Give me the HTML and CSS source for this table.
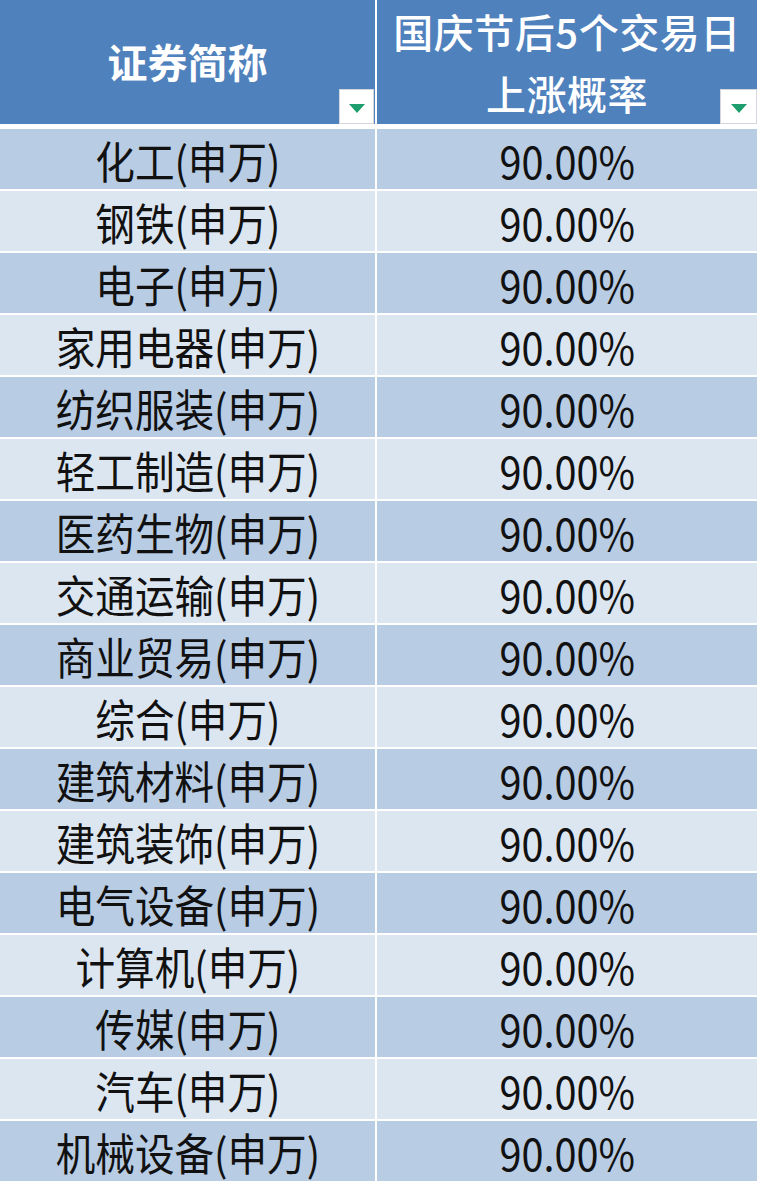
FILE: index.html
```html
<!DOCTYPE html>
<html lang="zh-CN">
<head>
<meta charset="utf-8">
<title>申万行业上涨概率</title>
<link rel="stylesheet" href="styles.css">
</head>
<body>
<div class="table">
  <div class="hcell">
    <span class="htext">证券简称</span>
    <span class="filter"><svg width="16" height="9" viewBox="0 0 16 9"><polygon points="0,0 16,0 8,9" fill="#1e9e6e"/></svg></span>
  </div>
  <div class="hcell hcell-r">
    <span class="htext htext-2">国庆节后5个交易日<br>上涨概率</span>
    <span class="filter filter-r"><svg width="16" height="9" viewBox="0 0 16 9"><polygon points="0,0 16,0 8,9" fill="#1e9e6e"/></svg></span>
  </div>

  <div class="cell dark"><span class="txt">化工(申万)</span></div><div class="cell dark"><span class="txt">90.00%</span></div>
  <div class="cell light"><span class="txt">钢铁(申万)</span></div><div class="cell light"><span class="txt">90.00%</span></div>
  <div class="cell dark"><span class="txt">电子(申万)</span></div><div class="cell dark"><span class="txt">90.00%</span></div>
  <div class="cell light"><span class="txt">家用电器(申万)</span></div><div class="cell light"><span class="txt">90.00%</span></div>
  <div class="cell dark"><span class="txt">纺织服装(申万)</span></div><div class="cell dark"><span class="txt">90.00%</span></div>
  <div class="cell light"><span class="txt">轻工制造(申万)</span></div><div class="cell light"><span class="txt">90.00%</span></div>
  <div class="cell dark"><span class="txt">医药生物(申万)</span></div><div class="cell dark"><span class="txt">90.00%</span></div>
  <div class="cell light"><span class="txt">交通运输(申万)</span></div><div class="cell light"><span class="txt">90.00%</span></div>
  <div class="cell dark"><span class="txt">商业贸易(申万)</span></div><div class="cell dark"><span class="txt">90.00%</span></div>
  <div class="cell light"><span class="txt">综合(申万)</span></div><div class="cell light"><span class="txt">90.00%</span></div>
  <div class="cell dark"><span class="txt">建筑材料(申万)</span></div><div class="cell dark"><span class="txt">90.00%</span></div>
  <div class="cell light"><span class="txt">建筑装饰(申万)</span></div><div class="cell light"><span class="txt">90.00%</span></div>
  <div class="cell dark"><span class="txt">电气设备(申万)</span></div><div class="cell dark"><span class="txt">90.00%</span></div>
  <div class="cell light"><span class="txt">计算机(申万)</span></div><div class="cell light"><span class="txt">90.00%</span></div>
  <div class="cell dark"><span class="txt">传媒(申万)</span></div><div class="cell dark"><span class="txt">90.00%</span></div>
  <div class="cell light"><span class="txt">汽车(申万)</span></div><div class="cell light"><span class="txt">90.00%</span></div>
  <div class="cell dark"><span class="txt">机械设备(申万)</span></div><div class="cell dark"><span class="txt">90.00%</span></div>
</div>
</body>
</html>
```

FILE: styles.css
```css
html, body {
  margin: 0;
  padding: 0;
  background: #ffffff;
}

body {
  width: 762px;
  height: 1186px;
  overflow: hidden;
  font-family: "Noto Sans CJK SC", "Noto Sans", sans-serif;
}

.table {
  display: grid;
  grid-template-columns: 375px 380px;
  grid-template-rows: 127px;
  grid-auto-rows: 60px;
  column-gap: 2px;
  row-gap: 2px;
}

.hcell {
  position: relative;
  height: 124px;
  align-self: start;
  background: #4f81bd;
  color: #ffffff;
  display: flex;
  align-items: center;
  justify-content: center;
}

.htext {
  font-size: 40px;
  font-weight: 700;
  line-height: 62px;
  text-align: center;
  margin-top: -2px;
}

.htext-2 {
  font-size: 40px;
  font-weight: 500;
  letter-spacing: 0.5px;
  margin-top: 0;
}

.filter {
  position: absolute;
  right: 1px;
  bottom: 0;
  width: 33px;
  height: 33px;
  background: #ffffff;
  border: 1px solid #d4d8de;
  display: flex;
  align-items: center;
  justify-content: center;
}

.filter svg {
  display: block;
  margin-top: 4px;
}

.filter-r {
  right: 0;
  width: 35px;
}

.cell {
  display: flex;
  align-items: center;
  justify-content: center;
  color: #111111;
}

.dark {
  background: #b8cce4;
}

.light {
  background: #dce6f1;
}

.txt {
  display: inline-block;
  font-size: 44px;
  font-weight: 400;
  line-height: 60px;
  white-space: nowrap;
  transform: scaleX(0.9);
  margin-top: 1px;
}
```
